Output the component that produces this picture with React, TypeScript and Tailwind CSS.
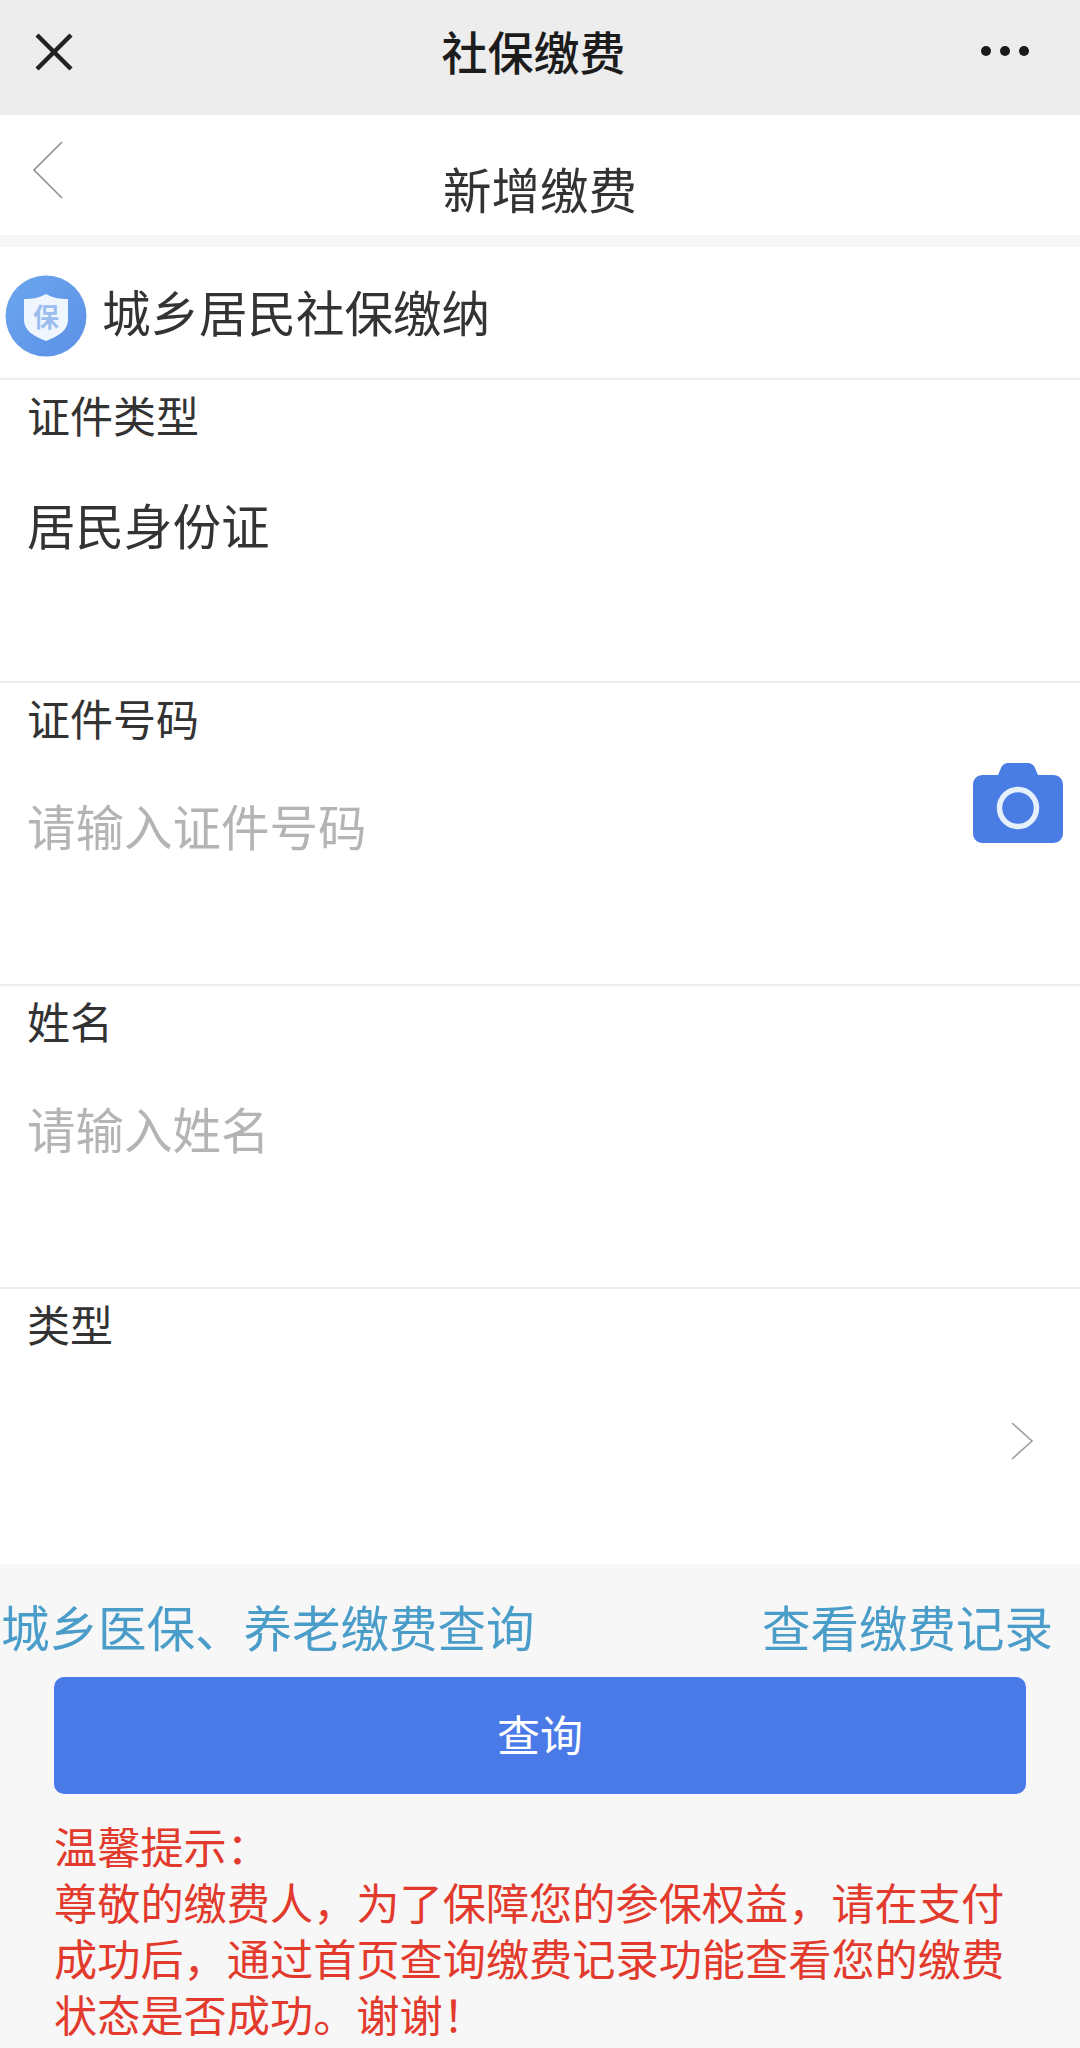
const FONT = "font-['Noto_Sans_CJK_SC','Noto_Sans',sans-serif]";

function ShieldBadge() {
  return (
    <svg width="84" height="84" viewBox="0 0 84 84" className="mt-[8px] shrink-0">
      <defs>
        <linearGradient id="badge" x1="0" y1="0" x2="1" y2="1">
          <stop offset="0" stopColor="#6ba6ee" />
          <stop offset="1" stopColor="#5c90e6" />
        </linearGradient>
      </defs>
      <circle cx="42" cy="42" r="40.5" fill="url(#badge)" />
      <path
        d="M42 20c7 4 13 5 22 5v21c0 10-9 16-22 21-13-5-22-11-22-21V25c9 0 15-1 22-5z"
        fill="#f0f6fe"
      />
      <text x="42" y="53" textAnchor="middle" fontSize="26" fontWeight="700" fill="#9cbeee">
        保
      </text>
    </svg>
  );
}

function CameraIcon() {
  return (
    <svg width="94" height="84" viewBox="0 0 94 84">
      <path
        d="M12 14h15l3-7c1-3 4-5 8-5h18c4 0 7 2 8 5l3 7h15c6 0 10 4 10 10v48c0 6-4 10-10 10H12C6 82 2 78 2 72V24c0-6 4-10 10-10z"
        fill="#4a7de3"
      />
      <circle cx="47" cy="47" r="18.5" fill="none" stroke="#e6effc" strokeWidth="5.5" />
    </svg>
  );
}

function Field({ label, children }: { label: string; children?: React.ReactNode }) {
  return (
    <div className="h-[303px] border-b-2 border-[#eeeeee] pl-[27px] pt-[7px]">
      <div className="text-[43px] leading-[54px] text-[#333333]">{label}</div>
      {children}
    </div>
  );
}

export default function App() {
  return (
    <div className={`${FONT} flex h-[2048px] w-[1080px] flex-col overflow-hidden bg-white`}>
      {/* WeChat title bar */}
      <div className="flex h-[115px] shrink-0 items-center justify-between bg-[#ededed] pl-[34px] pr-[51px]">
        <svg width="40" height="40" viewBox="0 0 40 40" className="-mt-[12px]">
          <path d="M3 3l34 34M37 3 3 37" fill="none" stroke="#222222" strokeWidth="4.5" />
        </svg>
        <span className="-mt-[14px] ml-[12px] text-[46px] font-medium text-[#1c1c1c]">社保缴费</span>
        <div className="-mt-[14px] flex gap-[9px]">
          <span className="h-[10px] w-[10px] rounded-full bg-[#1a1a1a]" />
          <span className="h-[10px] w-[10px] rounded-full bg-[#1a1a1a]" />
          <span className="h-[10px] w-[10px] rounded-full bg-[#1a1a1a]" />
        </div>
      </div>

      {/* Page nav */}
      <div className="relative flex h-[132px] shrink-0 items-center justify-center border-b-[12px] border-[#f6f6f6] bg-white">
        <svg width="34" height="60" viewBox="0 0 34 60" className="absolute left-[31px] top-[25px]">
          <path d="M31 2 3 30l28 28" fill="none" stroke="#8f8f8f" strokeWidth="1.6" />
        </svg>
        <span className="mt-[26px] text-[48.5px] leading-none text-[#333333]">新增缴费</span>
      </div>

      {/* Service heading */}
      <div className="flex h-[133px] shrink-0 items-center gap-[14px] border-b-2 border-[#eeeeee] pb-[2px] pl-[4px]">
        <ShieldBadge />
        <span className="text-[48.5px] leading-none text-[#333333]">城乡居民社保缴纳</span>
      </div>

      <Field label="证件类型">
        <div className="mt-[59px] text-[48.5px] leading-none text-[#333333]">居民身份证</div>
      </Field>

      <div className="relative">
        <Field label="证件号码">
          <div className="mt-[57px] text-[48.5px] leading-none text-[#b4b4b4]">请输入证件号码</div>
        </Field>
        <div className="absolute right-[15px] top-[78px]">
          <CameraIcon />
        </div>
      </div>

      <Field label="姓名">
        <div className="mt-[57px] text-[48.5px] leading-none text-[#b4b4b4]">请输入姓名</div>
      </Field>

      <div className="relative h-[275px] shrink-0 pl-[27px] pt-[7px]">
        <div className="text-[43px] leading-[54px] text-[#333333]">类型</div>
        <svg width="24" height="40" viewBox="0 0 24 40" className="absolute right-[46px] top-[132px]">
          <path d="M2 2l20 18L2 38" fill="none" stroke="#a0a0a0" strokeWidth="1.6" />
        </svg>
      </div>

      {/* Footer actions and notice */}
      <div className="flex-1 bg-[#f7f7f8]">
        <div className="flex items-center justify-between pl-[1px] pr-[27px] pt-[33px]">
          <span className="text-[48.5px] leading-[58px] text-[#4a9dc8]">城乡医保、养老缴费查询</span>
          <span className="text-[48.5px] leading-[58px] text-[#4a9dc8]">查看缴费记录</span>
        </div>
        <div className="mx-[54px] mt-[22px] flex h-[117px] items-center justify-center rounded-[10px] bg-[#4a7ae8] pb-[5px]">
          <span className="text-[43px] text-white">查询</span>
        </div>
        <div className="mx-[54px] mt-[23px] text-[43.2px] leading-[56px] text-[#e23a2c]">
          <div>温馨提示：</div>
          <div>尊敬的缴费人，为了保障您的参保权益，请在支付成功后，通过首页查询缴费记录功能查看您的缴费状态是否成功。谢谢！</div>
        </div>
      </div>
    </div>
  );
}
